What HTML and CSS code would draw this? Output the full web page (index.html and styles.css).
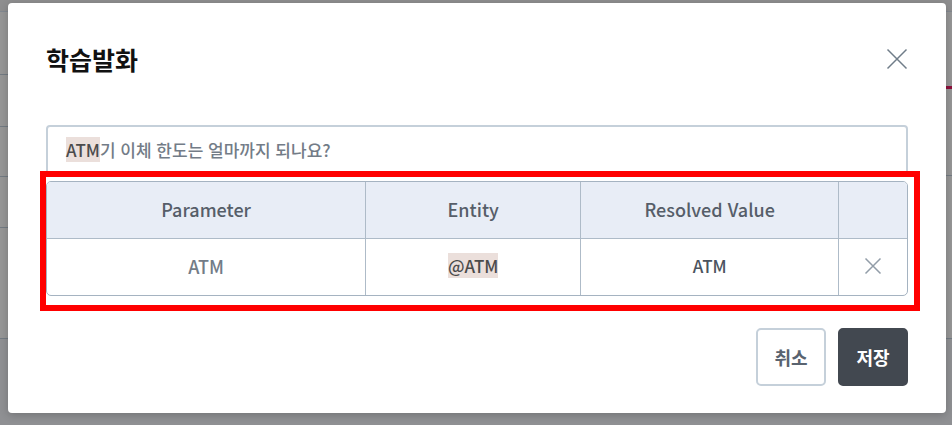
FILE: index.html
```html
<!DOCTYPE html>
<html lang="ko">
<head>
<meta charset="utf-8">
<meta name="viewport" content="width=device-width, initial-scale=1">
<title>학습발화</title>
<link rel="stylesheet" href="styles.css">
</head>
<body>
<div class="backdrop" aria-hidden="true">
  <div class="rail rail-left"><i></i><i></i><i></i><i></i><i></i><i></i><i></i></div>
  <div class="rail rail-right"><i></i><i class="accent"></i><i></i><i></i><i></i></div>
</div>
<main class="dialog" role="dialog" aria-labelledby="title">
  <header class="dialog-head">
    <h1 id="title">학습발화</h1>
    <button class="icon-button" type="button" aria-label="닫기">
      <svg width="22" height="22" viewBox="0 0 22 22"><path d="M1.5 1.5 20.5 20.5M20.5 1.5 1.5 20.5"/></svg>
    </button>
  </header>
  <div class="utterance" role="textbox" contenteditable="true" spellcheck="false" aria-labelledby="title"><mark>ATM</mark>기 이체 한도는 얼마까지 되나요?</div>
  <div class="params">
    <table>
      <colgroup><col class="col-param"><col class="col-entity"><col class="col-value"><col class="col-action"></colgroup>
      <thead>
        <tr><th scope="col">Parameter</th><th scope="col">Entity</th><th scope="col">Resolved Value</th><th></th></tr>
      </thead>
      <tbody>
        <tr>
          <td class="param">ATM</td>
          <td><mark>@ATM</mark></td>
          <td class="value">ATM</td>
          <td><button class="icon-button remove" type="button" aria-label="삭제"><svg width="18" height="18" viewBox="0 0 18 18"><path d="M1.5 1.5 16.5 16.5M16.5 1.5 1.5 16.5"/></svg></button></td>
        </tr>
      </tbody>
    </table>
    <div class="callout" aria-hidden="true"></div>
  </div>
  <footer class="actions">
    <button class="button" type="button">취소</button>
    <button class="button primary" type="button">저장</button>
  </footer>
</main>
</body>
</html>
```
FILE: styles.css
```css
* { box-sizing: border-box; }
body {
  margin: 0;
  min-height: 100vh;
  padding: 3px 6px 12px 8px;
  background: #969696;
  color: #737c87;
  font-family: "Noto Sans CJK KR", "Noto Sans", sans-serif;
  font-size: 17px;
  line-height: 26px;
}
/* Dimmed page behind the dialog */
.backdrop {
  position: absolute;
  inset: 0;
  z-index: -1;
  display: flex;
  justify-content: space-between;
  overflow: hidden;
}
.rail {
  display: grid;
  width: 50%;
}
.rail-left { grid-template-rows: 12px 63px 52px 50px 51px 111px 1fr; }
.rail-right { grid-template-rows: 12px 77px 87px 163px 1fr; }
.rail i { border-bottom: 1px solid #737b83; }
.rail i:first-child { background: #8e8e8f; border-color: #828890; }
.rail i:last-child { background: #8f9093; border: 0; }
.rail .accent { border-bottom: 3px solid #8d0f3b; }

.dialog {
  padding: 38px 38px 27px;
  background: #fff;
  border-radius: 4px;
  box-shadow: 0 2px 8px rgba(0, 0, 0, .2);
}
.dialog-head {
  display: flex;
  justify-content: space-between;
  align-items: center;
  height: 36px;
  margin-bottom: 48px;
}
h1 {
  margin: 0;
  color: #111;
  font-size: 25px;
  line-height: 36px;
  font-weight: 700;
}
.icon-button {
  display: inline-flex;
  padding: 0;
  border: 0;
  background: none;
  cursor: pointer;
}
.icon-button path { fill: none; stroke: #707d89; stroke-width: 1.5; }
.remove { vertical-align: middle; }
.remove path { stroke: #929da8; }
mark { background: #ebdfdb; color: #4b4b4b; }

.utterance {
  min-height: 52px;
  padding: 10px 18px;
  border: 2px solid #c5d0da;
  border-radius: 4px;
  font-weight: 500;
}
.params { position: relative; margin-top: 4px; }
table {
  width: 100%;
  table-layout: fixed;
  border: 1px solid #a5b3c1;
  border-radius: 5px;
  border-spacing: 0;
  overflow: hidden;
  text-align: center;
}
.col-param { width: 37%; }
.col-entity { width: 25%; }
.col-value { width: 30%; }
.col-action { width: 8%; }
th, td { height: 56px; padding: 0 0 2px; }
td { font-weight: 500; }
th {
  height: 57px;
  background: #e8edf6;
  border-bottom: 1px solid #aebbc8;
  color: #565e69;
  font-size: 18px;
  font-weight: 500;
}
th + th, td + td { border-left: 1px solid #aebbc8; }
.param { font-size: 18px; }
.value { color: #4b535e; }
td:last-child { padding-bottom: 6px; }
/* Red outline that singles out the parameter table */
.callout {
  position: absolute;
  inset: -10px -12px -15px -6px;
  border: 6px solid #f00;
  pointer-events: none;
}
.actions {
  display: flex;
  justify-content: flex-end;
  gap: 12px;
  margin-top: 32px;
}
.button {
  min-width: 70px;
  height: 58px;
  padding: 0 16px;
  border: 2px solid #c5d0da;
  border-radius: 5px;
  background: #fff;
  color: #59636f;
  font: inherit;
  font-size: 18px;
  font-weight: 700;
}
.primary { background: #424850; border-color: #424850; color: #fff; }
```
